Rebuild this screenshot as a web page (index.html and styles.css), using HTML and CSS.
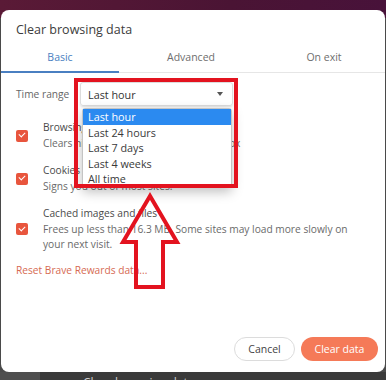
FILE: index.html
```html
<!DOCTYPE html>
<html lang="en">
<head>
    <meta charset="UTF-8">
    <meta name="viewport" content="width=device-width, initial-scale=1.0">
    <title>Clear browsing data</title>
    <link rel="stylesheet" href="styles.css">
</head>
<body>
<div class="screen">
    <div class="topbar"></div>

    <div class="dialog">
        <h1 class="title">Clear browsing data</h1>

        <div class="tabs">
            <div class="tab active">Basic</div>
            <div class="tab">Advanced</div>
            <div class="tab">On exit</div>
        </div>

        <div class="content">
            <div class="range">
                <span class="range-label">Time range</span>
                <div class="select">
                    <span>Last hour</span>
                    <span class="caret"></span>
                    <ul class="options">
                        <li class="selected">Last hour</li>
                        <li>Last 24 hours</li>
                        <li>Last 7 days</li>
                        <li>Last 4 weeks</li>
                        <li>All time</li>
                    </ul>
                </div>
            </div>

            <div class="item">
                <span class="check"></span>
                <div class="item-text">
                    <div class="item-title">Browsing history</div>
                    <div class="item-desc">Clears history, including in the search box</div>
                </div>
            </div>

            <div class="item">
                <span class="check"></span>
                <div class="item-text">
                    <div class="item-title">Cookies and other site data</div>
                    <div class="item-desc">Signs you out of most sites.</div>
                </div>
            </div>

            <div class="item">
                <span class="check"></span>
                <div class="item-text">
                    <div class="item-title">Cached images and files</div>
                    <div class="item-desc">Frees up less than 16.3 MB. Some sites may load more slowly on your next visit.</div>
                </div>
            </div>

            <a class="reset" href="#">Reset Brave Rewards data...</a>
        </div>

        <div class="actions">
            <button class="btn btn-cancel">Cancel</button>
            <button class="btn btn-clear">Clear data</button>
        </div>
    </div>

    <div class="below">
        <span class="below-side"></span>
        <span class="below-text">Clear browsing data</span>
    </div>

    <!-- annotation overlays -->
    <div class="mark-box"></div>
    <svg class="mark-arrow" width="386" height="380" viewBox="0 0 386 380">
        <polygon points="150,196 123,242 136,242 136,287 163,287 163,242 177,242"
                 fill="none" stroke="#e3131f" stroke-width="4"/>
    </svg>
</div>
</body>
</html>
```

FILE: styles.css
```css
* {
    box-sizing: border-box;
}

body {
    margin: 0;
    font-family: 'Open Sans', 'Noto Sans', sans-serif;
    background: #3b3b3b;
}

.screen {
    position: relative;
    width: 386px;
    height: 380px;
    overflow: hidden;
    background: #4a4a4a;
}

.topbar {
    height: 18px;
    margin-bottom: -8px;
    background: linear-gradient(90deg, #5a1a36, #4a1434 60%, #48123a);
}

.dialog {
    position: relative;
    display: flex;
    flex-direction: column;
    height: 362px;
    margin-left: 1px;
    width: 384px;
    background: #fff;
    border-radius: 8px;
}

.title {
    margin: 10px 0 2px 15px;
    font-size: 12.5px;
    line-height: 20px;
    font-weight: 400;
    color: #3c3c3c;
}

.tabs {
    display: grid;
    grid-template-columns: 118px 144px 1fr;
    border-bottom: 1px solid #e6e6e6;
}

.tab {
    position: relative;
    height: 30px;
    line-height: 30px;
    text-align: center;
    font-size: 10.5px;
    color: #6e6e6e;
}

.tab.active {
    color: #4a7fc1;
}

.tab.active::after {
    content: "";
    position: absolute;
    left: 0;
    right: 0;
    bottom: -1px;
    height: 2px;
    background: #4a7fc1;
}

.content {
    padding: 9px 0 0 15px;
    font-size: 10.2px;
    color: #5f5f5f;
}

.range {
    display: flex;
    align-items: center;
    margin-bottom: 14px;
}

.range-label {
    width: 64px;
    color: #666;
}

.select {
    position: relative;
    display: flex;
    align-items: center;
    justify-content: space-between;
    width: 153px;
    height: 24px;
    padding: 0 9px 0 7px;
    border: 1px solid #dcdcdc;
    border-radius: 3px;
    box-shadow: 0 1px 2px rgba(0, 0, 0, 0.12);
    font-size: 10.8px;
    color: #333;
}

.caret {
    width: 0;
    height: 0;
    border-left: 3.5px solid transparent;
    border-right: 3.5px solid transparent;
    border-top: 4px solid #555;
}

.options {
    position: absolute;
    top: 25px;
    left: 1px;
    width: 150px;
    margin: 0;
    padding: 0;
    list-style: none;
    background: #fff;
    border: 1px solid #c4c4c4;
    border-radius: 3px;
    box-shadow: 0 4px 12px rgba(0, 0, 0, 0.25);
    z-index: 2;
}

.options li {
    height: 15.5px;
    line-height: 15.5px;
    padding-left: 5px;
    color: #3a3a3a;
}

.options li.selected {
    background: #2b8af0;
    color: #fff;
}

.item {
    display: flex;
    align-items: center;
    margin-bottom: 12px;
}

.check {
    position: relative;
    flex: none;
    width: 12px;
    height: 12px;
    margin-right: 15px;
    border-radius: 2px;
    background: #e8553d;
}

.check::after {
    content: "";
    position: absolute;
    left: 3px;
    top: 2.5px;
    width: 5px;
    height: 3px;
    border-left: 1.5px solid #fff;
    border-bottom: 1.5px solid #fff;
    transform: rotate(-45deg);
}

.item-text {
    line-height: 15.5px;
    padding-right: 34px;
}

.item-title {
    color: #4a4a4a;
}

.item-desc {
    color: #6a6a6a;
}

.reset {
    display: block;
    margin-top: -2px;
    line-height: 15.5px;
    color: #d66a52;
    text-decoration: none;
}

.actions {
    display: flex;
    justify-content: flex-end;
    gap: 6px;
    margin-top: auto;
    padding: 0 7px 11px 0;
}

.btn {
    height: 24px;
    padding: 0;
    border-radius: 12px;
    font-family: inherit;
    font-size: 10.5px;
    white-space: nowrap;
}

.btn-cancel {
    width: 61px;
    background: #fff;
    border: 1px solid #dcdcdc;
    color: #444;
}

.btn-clear {
    width: 77px;
    background: #f57a58;
    border: none;
    color: #fff;
}

.below {
    display: flex;
    height: 8px;
}

.below-side {
    width: 40px;
    background: #4e4e4e;
}

.below-text {
    flex: 1;
    padding: 5px 0 0 43px;
    background: #3a3a3a;
    color: #cfcfcf;
    font-size: 12px;
    line-height: 12px;
    white-space: nowrap;
    overflow: hidden;
}

.mark-box {
    position: absolute;
    left: 74px;
    top: 78px;
    width: 164px;
    height: 110px;
    border: 4px solid #e3131f;
    z-index: 3;
}

.mark-arrow {
    position: absolute;
    left: 0;
    top: 0;
    z-index: 3;
}
```
